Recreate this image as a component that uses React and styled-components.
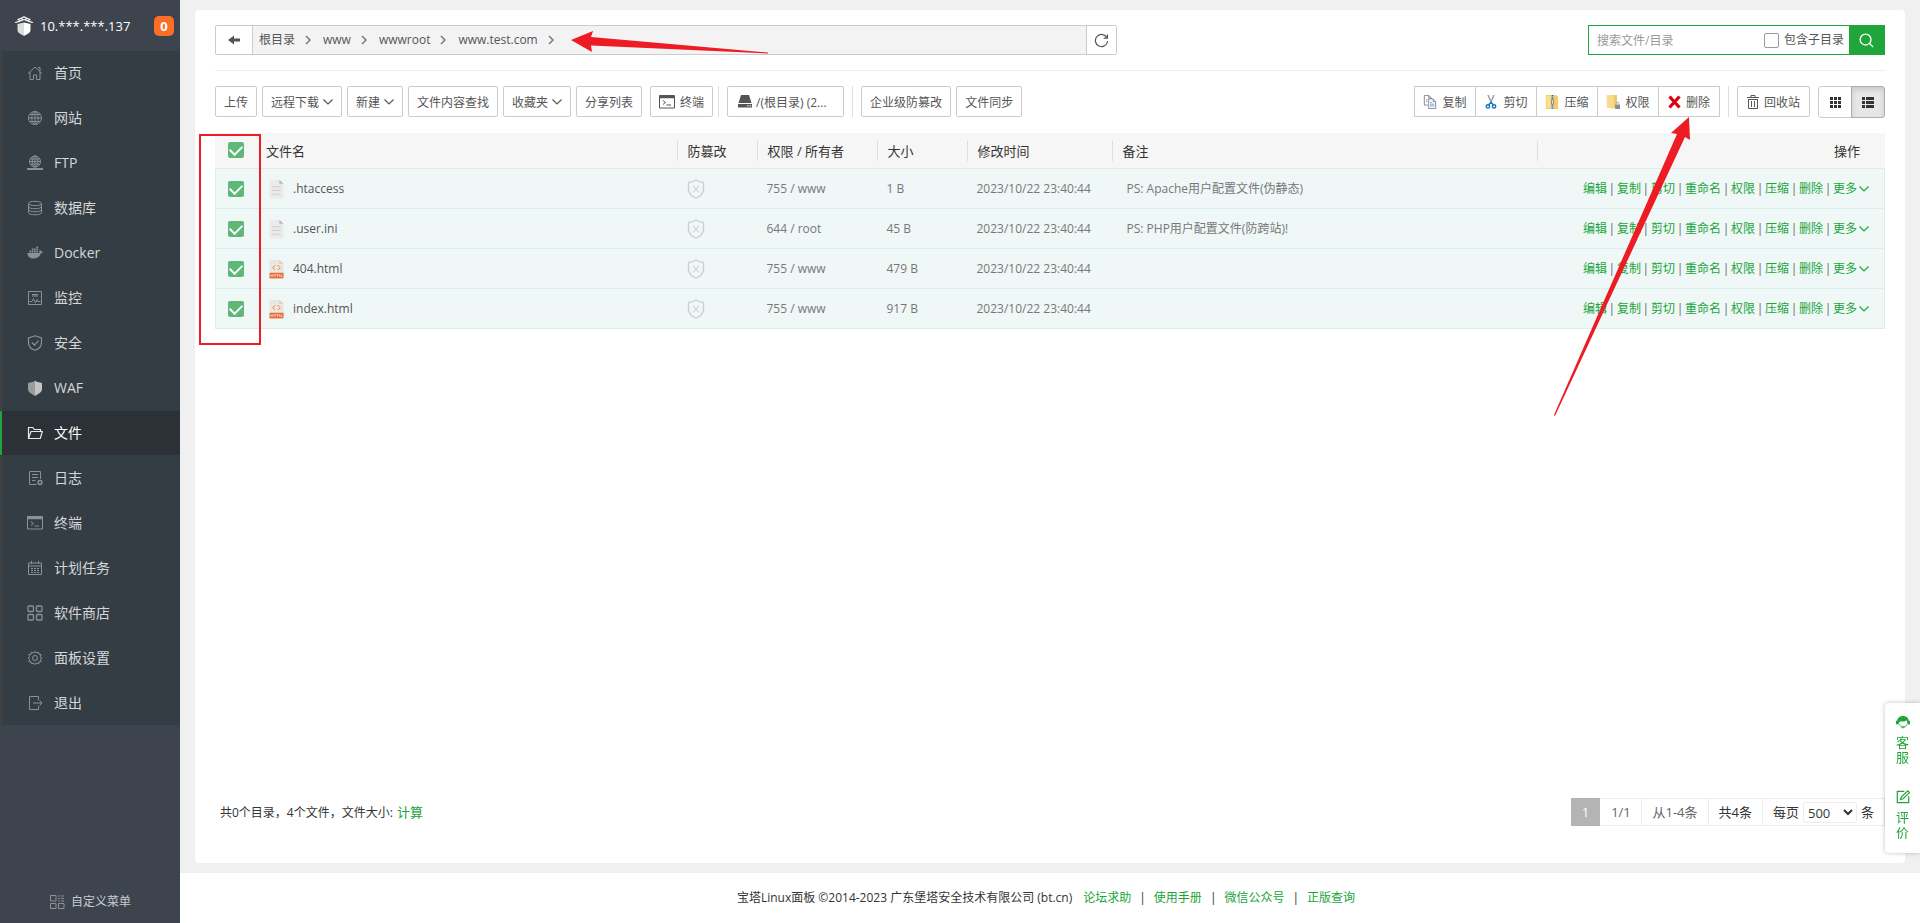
import React from "react";
import styled, { createGlobalStyle } from "styled-components";

const GlobalStyle = createGlobalStyle`
    * {
        box-sizing: border-box;
    }
    body {
        margin: 0;
        background: #f0f0f0;
        color: #333;
        font-family: "Open Sans", "Noto Sans", "Noto Sans CJK SC", sans-serif;
        font-size: 12px;
        line-height: 20px;
    }
    a {
        color: #20a53a;
        text-decoration: none;
    }
    button, input, select {
        font-family: inherit;
        font-size: inherit;
        color: inherit;
        margin: 0;
    }
    button {
        cursor: pointer;
    }
    svg {
        display: block;
        flex: none;
    }
`

const Page = styled.div`
    position: relative;
    display: flex;
    min-height: 100vh;
`
const Sidebar = styled.aside`
    display: flex;
    flex-direction: column;
    flex: none;
    width: 180px;
    background: #3d444d;
`
const Brand = styled.div`
    display: flex;
    align-items: center;
    height: 51px;
    padding: 0 6px 0 15px;
    color: #fff;
    font-size: 13px;
    svg {
        margin-right: 7px;
    }
    span {
        flex: 1;
    }
`
const Badge = styled.b`
    width: 20px;
    height: 20px;
    border-radius: 5px;
    background: #fc6d26;
    font-size: 13px;
    text-align: center;
`
const MenuList = styled.ul`
    margin: 0;
    padding: 0;
    list-style: none;
    background: #353d44;
    li {
        border-bottom: 1px solid #353d44;
    }
    li:last-child {
        border-bottom: 0;
    }
`
const MenuLink = styled.a`
    display: flex;
    align-items: center;
    gap: 11px;
    height: 44px;
    padding-left: 25px;
    border-left: 2px solid ${props => props.$active ? "#20a53a" : "#414141"};
    background: ${props => props.$active ? "#2c3138" : "transparent"};
    color: ${props => props.$active ? "#fff" : "#d4d7d9"};
    font-size: 14px;
    svg {
        color: ${props => props.$active ? "#e8e8e8" : "#8d9194"};
    }
`
const CustomMenu = styled.a`
    display: flex;
    justify-content: center;
    align-items: center;
    gap: 6px;
    height: 43px;
    margin-top: auto;
    color: #c8ccd0;
    svg {
        color: #8d9194;
    }
`
const Main = styled.main`
    display: flex;
    flex-direction: column;
    flex: 1;
    min-width: 0;
`
const Card = styled.section`
    display: flex;
    flex-direction: column;
    flex: 1;
    margin: 10px 15px;
    padding: 15px 20px 37px;
    border-radius: 4px;
    background: #fff;
`
const TopBar = styled.div`
    display: flex;
    justify-content: space-between;
    padding-bottom: 15px;
    border-bottom: 1px solid #ececec;
`
const PathBar = styled.div`
    display: flex;
    width: 902px;
    height: 30px;
    border: 1px solid #ccc;
    border-radius: 2px;
    background: #f3f3f3;
`
const PathButton = styled.button`
    display: flex;
    align-items: center;
    justify-content: center;
    width: ${props => props.$wide ? "37px" : "30px"};
    padding: 0;
    border: 0;
    border-${props => props.$wide ? "right" : "left"}: 1px solid #ccc;
    background: #fff;
    color: #555;
`
const Crumbs = styled.nav`
    display: flex;
    align-items: center;
    flex: 1;
    padding-left: 6px;
    a {
        display: flex;
        align-items: center;
        color: #555;
    }
    svg {
        margin: 0 12px 0 10px;
    }
`
const SearchBox = styled.form`
    display: flex;
    align-items: center;
    width: 297px;
    height: 30px;
    border: 1px solid #20a53a;
    input[type="text"] {
        flex: 1;
        min-width: 0;
        height: 28px;
        padding: 0 8px;
        border: 0;
        outline: 0;
        &::placeholder {
            color: #999;
        }
    }
    label {
        display: flex;
        align-items: center;
        gap: 5px;
        margin-right: 5px;
        color: #555;
    }
    button {
        display: flex;
        align-items: center;
        justify-content: center;
        width: 35px;
        height: 28px;
        padding: 0;
        border: 0;
        background: #20a53a;
        color: #fff;
    }
`
const PlainCheck = styled.input`
    appearance: none;
    width: 15px;
    height: 15px;
    border: 1px solid #999;
    border-radius: 2px;
    background: #fff;
`
const Toolbar = styled.div`
    display: flex;
    justify-content: space-between;
    height: 62px;
    padding: 15px 0;
`
const ToolGroup = styled.div`
    display: flex;
    align-items: flex-start;
    gap: ${props => props.$gap || "5px"};
`
const Divider = styled.span`
    width: 1px;
    height: 31px;
    margin: ${props => props.$margin || "0"};
    background: #ddd;
`
const Button = styled.button`
    display: flex;
    align-items: center;
    justify-content: center;
    gap: 4px;
    height: 31px;
    padding: 0 8px;
    border: 1px solid #ccc;
    border-radius: 2px;
    background: #fff;
    color: #555;
    white-space: nowrap;
`
const TerminalButton = styled(Button)`
    gap: 5px;
    margin-left: 3px;
`
const DiskButton = styled(Button)`
    justify-content: flex-start;
    width: 117px;
    padding: 0 10px;
`
const TrashButton = styled(Button)`
    gap: 5px;
    padding: 0 9px;
`
const JoinedButtons = styled.div`
    display: flex;
    button {
        gap: 5px;
        width: 62px;
        padding: 0;
        border-radius: 0;
    }
    button + button {
        margin-left: -1px;
    }
`
const ViewSwitch = styled.div`
    display: flex;
`
const ViewButton = styled.button`
    display: flex;
    align-items: center;
    justify-content: center;
    width: 34px;
    height: 32px;
    padding: 0;
    border: 1px solid ${props => props.$active ? "#adadad" : "#ccc"};
    border-radius: ${props => props.$active ? "0 3px 3px 0" : "3px 0 0 3px"};
    margin-left: ${props => props.$active ? "-1px" : "0"};
    background: ${props => props.$active ? "#e6e6e6" : "#fff"};
    box-shadow: ${props => props.$active ? "inset 0 3px 5px rgba(0, 0, 0, .12)" : "none"};
    color: #333;
`
const FileTable = styled.table`
    width: 100%;
    table-layout: fixed;
    border-collapse: separate;
    border-spacing: 0;
    th {
        height: 36px;
        padding: 0;
        border-bottom: 1px solid #e8e8e8;
        background: #f6f6f6;
        font-size: 13px;
        font-weight: normal;
        text-align: left;
    }
    td {
        height: 40px;
        padding: 1px 0 0 10px;
        border-bottom: 1px solid #dbefea;
        background: #eff8f7;
        color: #777;
        white-space: nowrap;
    }
    td:first-child {
        border-left: 1px solid #dbefea;
    }
    td:last-child {
        border-right: 1px solid #dbefea;
    }
`
const Col = styled.col`
    width: ${props => props.$width};
`
const HeadCell = styled.div`
    display: flex;
    align-items: center;
    justify-content: ${props => props.$end ? "flex-end" : "flex-start"};
    height: 20px;
    padding: 0 ${props => props.$end ? "25px" : "0"} 0 ${props => props.$first ? "7px" : "10px"};
    border-left: ${props => props.$first ? "0" : "1px solid #ddd"};
`
const CheckCell = styled.div`
    display: flex;
    padding: ${props => props.$head ? "0 0 2px 13px" : "0 0 0 2px"};
`
const GreenCheck = styled.input`
    appearance: none;
    display: flex;
    justify-content: center;
    width: 16px;
    height: 16px;
    border-radius: 2px;
    background: #fff;
    &:checked {
        background: #5fb878;
    }
    &:checked::after {
        content: "";
        width: 6px;
        height: 10px;
        margin-top: 1px;
        border: solid #fff;
        border-width: 0 2px 2px 0;
        transform: rotate(45deg);
    }
`
const FileName = styled.a`
    display: flex;
    align-items: center;
    gap: 9px;
    color: #555;
`
const Note = styled.span`
    padding-left: 5px;
`
const RowActions = styled.div`
    display: flex;
    justify-content: flex-end;
    padding-right: 15px;
    a {
        display: flex;
        align-items: center;
        gap: 2px;
    }
    span {
        width: 10px;
        color: #666;
        text-align: center;
    }
`
const CardFooter = styled.div`
    display: flex;
    align-items: center;
    justify-content: space-between;
    margin-top: auto;
    padding-left: 5px;
    a {
        margin-left: 1px;
        font-size: 13px;
    }
`
const Pager = styled.div`
    display: flex;
    height: 28px;
    font-size: 13px;
`
const PagerItem = styled.span`
    display: flex;
    align-items: center;
    justify-content: center;
    gap: 4px;
    min-width: ${props => props.$current ? "29px" : "42px"};
    padding: 0 10px;
    border: 1px solid #ececec;
    border-left: 0;
    color: ${props => props.$dim ? "#666" : "#333"};
    ${props => props.$current && "background: #b4b4b4; border-color: #b4b4b4; color: #fff;"}
    label {
        display: flex;
        align-items: center;
        gap: 4px;
    }
    select {
        width: 54px;
        height: 21px;
        padding: 0;
        border: 1px solid #ececec;
        border-radius: 2px;
        background: #fff;
    }
`
const Copyright = styled.footer`
    display: flex;
    align-items: center;
    justify-content: center;
    gap: 8px;
    height: 50px;
    padding-right: 8px;
    background: #fff;
    span {
        margin-right: 3px;
    }
`
const SideWidget = styled.aside`
    position: fixed;
    right: 0;
    bottom: 70px;
    display: flex;
    flex-direction: column;
    align-items: center;
    gap: 25px;
    width: 35px;
    height: 150px;
    padding: 12px 0;
    border-radius: 4px 0 0 4px;
    background: #fff;
    box-shadow: 0 0 4px rgba(0, 0, 0, .25);
    a {
        display: flex;
        flex-direction: column;
        align-items: center;
        gap: 6px;
        width: 14px;
        font-size: 13px;
        line-height: 15px;
        text-align: center;
    }
`
const MarkBox = styled.div`
    position: absolute;
    left: 199px;
    top: 134px;
    width: 62px;
    height: 211px;
    border: 2px solid #ed1c24;
    pointer-events: none;
`
const PathArrow = styled.svg`
    position: absolute;
    left: 571px;
    top: 30px;
    pointer-events: none;
`
const DeleteArrow = styled.svg`
    position: absolute;
    right: 220px;
    top: 117px;
    pointer-events: none;
`

const Icon = ({ size = 16, children, ...rest }) => (
    <svg width={size} height={size} viewBox="0 0 16 16" fill="none" stroke="currentColor" strokeWidth="1" aria-hidden="true" {...rest}>
        {children}
    </svg>
)

const icons = {
    home: <path d="M1 8.500 8 2l7 6.500M3 7v7.500h3.500V10h3v4.500H13V7M11 2.500h2V6" />,
    globe: <g><circle cx="8" cy="8" r="6.500" /><path d="M1.500 8h13M8 1.500v13M3 4.500h10M3 11.500h10" /><ellipse cx="8" cy="8" rx="3.200" ry="6.500" /></g>,
    ftp: <g><circle cx="8" cy="6.500" r="5.500" /><path d="M2.500 6.500h11M8 1v11M3.500 4h9M3.500 9h9" /><ellipse cx="8" cy="6.500" rx="2.800" ry="5.500" /><path d="M0 14h16" strokeWidth="2" /></g>,
    database: <g><ellipse cx="8" cy="3.500" rx="6.500" ry="2.200" /><path d="M1.500 3.500v9c0 3 13 3 13 0v-9M1.500 6.500c0 3 13 3 13 0M1.500 9.500c0 3 13 3 13 0" /></g>,
    docker: <g fill="currentColor" stroke="none"><path d="M.500 8h11c.8 0 1.200-.5 1-1.500-.2-.8 0-1.300.5-1.800.7.500 1 1 1 1.800.7-.1 1.500 0 2 .5-.5.900-1.300 1.200-2.200 1.200C12.800 11.500 10.500 13.500 6.500 13.500 3 13.500.3 11.500.500 8z" /><path d="M2.500 5.500h1.700v2H2.500zM4.800 5.500h1.700v2H4.800zM7.100 5.500h1.700v2H7.100zM9.400 5.500h1.700v2H9.400zM4.800 3.500h1.700v1.400H4.800zM7.100 3.500h1.700v1.400H7.100zM9.400 3.500h1.700v1.400H9.400zM9.400 1.500h1.700v1.400H9.400z" /></g>,
    monitor: <g><path d="M1.500 1.500h13v13h-13zM5 4.500h6M5 6h6M2.500 11.500H5l1.500-3 2 4.500 1.500-3.500 1 2h2.500" /></g>,
    shield: <path d="M8 .8 14.500 3v5c0 3.500-3 6-6.500 7.300C4.500 14 1.500 11.500 1.500 8V3zM5 7.500l2.500 2.700 4-4.500" strokeWidth="1.200" />,
    waf: <g stroke="none"><path d="M8 .5 6.500 1.800 1 3v6c0 3.500 4 5 7 7z" fill="#9b9b9b" /><path d="M8 .5l1.500 1.300L15 3v6c0 3.500-4 5-7 7z" fill="#c4c4c4" /></g>,
    folder: <path d="M1.500 13.500V2.500h4.300L7.300 4.500h6.200v2M1.500 13.500 4 6.500h11.300l-2 7z" strokeWidth="1.200" />,
    log: <g><path d="M9.500 14.500h-7v-13h11v7.500M5 4.500h6M5 7.500h6M5 10.500h3.500" /><circle cx="13" cy="12.500" r="1.900" strokeWidth="1.500" /></g>,
    terminal: <g><path d="M.500 1.500h15v12.500H.500z" /><path d="M.500 3h15" strokeWidth="2.500" /><path d="M4 6.500 6.500 8.500 4 10.500M7.500 11H12" /></g>,
    calendar: <g><path d="M1.500 3h13v11.500h-13zM1.500 6h13M4.500 1v3M11.500 1v3" /><path d="M4 8.500h8.500M4 10.500h8.500M4 12.500h8.500" strokeDasharray="2 1" /></g>,
    apps: <g strokeWidth="1.300"><rect x="1" y="1" width="5.500" height="5.500" rx="1" /><rect x="9.500" y="1" width="5.500" height="5.500" rx="1" /><rect x="1" y="9.500" width="5.500" height="5.500" rx="1" /><rect x="9.500" y="9.500" width="5.500" height="5.500" rx="1" /></g>,
    gear: <g><path d="M6.800 3 8 1.300 9.200 3l2.500-.8.300 2.100 2.200.2-.8 2.300L15 8l-1.600 1.200.8 2.300-2.200.2-.3 2.100-2.500-.8L8 14.700 6.800 13l-2.500.8-.3-2.100-2.200-.2.800-2.300L1 8l1.600-1.200-.8-2.300 2.200-.2.300-2.100z" /><circle cx="8" cy="8" r="2.500" /></g>,
    exit: <path d="M11.500 5V1.500h-9v13h9V11M6 8h9M12.500 5.500 15 8l-2.500 2.500" />,
    custom: <path d="M1.500 1.500h5.500v5.500H1.500zM1.500 9.500h5.500v5H1.500zM9.500 9.500h5.500v5H9.500zM9 2h2M12 2h3M9 4.500h2M12 4.500h3M9 7h2M12 7h3" />,
}

const menu = [
    ["home", "首页"],
    ["globe", "网站"],
    ["ftp", "FTP"],
    ["database", "数据库"],
    ["docker", "Docker"],
    ["monitor", "监控"],
    ["shield", "安全"],
    ["waf", "WAF"],
    ["folder", "文件"],
    ["log", "日志"],
    ["terminal", "终端"],
    ["calendar", "计划任务"],
    ["apps", "软件商店"],
    ["gear", "面板设置"],
    ["exit", "退出"],
]

const files = [
    { name: ".htaccess", type: "text", owner: "755 / www", size: "1 B", note: "PS: Apache用户配置文件(伪静态)" },
    { name: ".user.ini", type: "text", owner: "644 / root", size: "45 B", note: "PS: PHP用户配置文件(防跨站)!" },
    { name: "404.html", type: "html", owner: "755 / www", size: "479 B", note: "" },
    { name: "index.html", type: "html", owner: "755 / www", size: "917 B", note: "" },
]

const actions = ["编辑", "复制", "剪切", "重命名", "权限", "压缩", "删除", "更多"]

const Chevron = () => (
    <svg width="10" height="10" viewBox="0 0 10 10" fill="none" stroke="currentColor" strokeWidth="1.200" aria-hidden="true">
        <path d="M.500 2.500 5 7l4.500-4.500" />
    </svg>
)

const CrumbArrow = () => (
    <svg width="6" height="10" viewBox="0 0 6 10" fill="none" stroke="#777" strokeWidth="1.500" aria-hidden="true">
        <path d="M1 1l4 4-4 4" />
    </svg>
)

const Logo = () => (
    <svg width="18" height="20" viewBox="0 0 18 20" aria-hidden="true">
        <path d="M9 6.500 2.500 8v6c0 3 3.500 4 6.500 6z" fill="#ddd" />
        <path d="M9 6.500 15.500 8v6c0 3-3.500 4-6.500 6z" fill="#fff" />
        <path d="M0 6.500C3 6 6 4.500 9 3.500c3 1 6 2.500 9 3M2.500 3.500C5 3 7 2 9 .8c2 1.200 4 2.200 6.500 2.700M4 3v3M14 3v3M7 2v3M11 2v3" fill="none" stroke="#fff" strokeWidth="1.200" />
    </svg>
)

const FileIcon = ({ type }) => (
    <svg width="15" height="20" viewBox="0 0 16 20" aria-hidden="true">
        <path d="M.500 0H11l4.500 4.500V20H.500z" fill={type === "html" ? "#ebe7dc" : "#ebebeb"} />
        <path d="M11 0v4.500h4.500z" fill={type === "html" ? "#d5d1c5" : "#bbb"} />
        {type === "html" ? (
            <g>
                <path d="M6.500 6 4 8.500 6.500 11M9.500 6 12 8.500 9.500 11" fill="none" stroke="#ed7a4d" />
                <path d="M.500 14h15v6H.500z" fill="#ea6a37" />
                <path d="M2 15.500v3M4 15.500v3M2 17h2M5 16h3M6.500 16v2.500M9 18.500v-3l1.200 1.500 1.300-1.500v3M13 15.500v2.800h1.500" fill="none" stroke="#fbd9ca" strokeWidth=".8" />
            </g>
        ) : (
            <path d="M3.500 7.500h9M3.500 11.500h9M3.500 15.500h9" stroke="#ccc" />
        )}
    </svg>
)

const TamperIcon = () => (
    <svg width="18" height="20" viewBox="0 0 18 20" fill="none" stroke="#ccd1d0" strokeWidth="1.400" aria-hidden="true">
        <path d="M9 1c2 1.600 4.500 2.300 7.500 2.500V10c0 4.500-3 7.300-7.500 9.200C4.500 17.300 1.500 14.500 1.500 10V3.500C4.500 3.300 7 2.600 9 1z" />
        <path d="M6 6.500l6 7M12 6.500l-6 7" strokeWidth="1.100" />
    </svg>
)

const CopyIcon = () => (
    <Icon size={14} stroke="#777f8c">
        <path d="M5.500 11.500h-4V.500h5l3 3v1.500M6.500.500v3h3M3.500 5.500H5M3.500 7.500H5" />
        <path d="M6.500 4.500h5l3 3v8h-8z" fill="#fff" />
        <path d="M11.500 4.500v3h3M8 8.500h2M8 10.500h5M8 12.500h5" stroke="#6793c9" />
    </Icon>
)

const CutIcon = () => (
    <Icon size={14}>
        <path d="M4.500 0 9 10M11.500 0 7 10" stroke="#8b97a3" strokeWidth="1.500" />
        <circle cx="4.500" cy="13" r="1.900" stroke="#1478c4" strokeWidth="1.700" />
        <circle cx="11.500" cy="13" r="1.900" stroke="#1478c4" strokeWidth="1.700" />
        <path d="M5.500 11 8 8.500l2.500 2.500" stroke="#1478c4" strokeWidth="1.700" />
    </Icon>
)

const ZipIcon = () => (
    <Icon size={14} stroke="none">
        <path d="M1 0h12l2 2v14H1z" fill="#f3cf62" />
        <path d="M2 1h5v14H2z" fill="#fbe08a" />
        <path d="M6.500 0h4v16h-4z" fill="#c5c5bc" />
        <path d="M8.500 0v5M8.500 11v5" stroke="#555" strokeWidth="1.500" strokeDasharray="1 1" />
        <path d="M7.500 5.500h2v5h-2z" fill="#fff" stroke="#666" strokeWidth=".8" />
    </Icon>
)

const LockIcon = () => (
    <Icon size={14} stroke="none">
        <path d="M1 0h11.500v15.500l-5-1-6.500-.5z" fill="#efc96b" />
        <path d="M1 0h8v16l-8-2z" fill="#f8db8e" />
        <path d="M10.500 11H16v5h-5.500z" fill="#8b8b8b" />
        <path d="M11.700 11V9.700c0-2 3-2 3 0V11" fill="none" stroke="#999" />
    </Icon>
)

const DeleteIcon = () => (
    <svg width="13" height="14" viewBox="0 0 13 14" stroke="#d9000f" strokeWidth="3.200" aria-hidden="true">
        <path d="M1.500 1.500l10 11M11.500 1.500l-10 11" />
    </svg>
)

const Menu = () => (
    <Sidebar>
        <Brand>
            <Logo />
            <span>10.***.***.137</span>
            <Badge>0</Badge>
        </Brand>
        <MenuList>
            {menu.map(([icon, label]) => (
                <li key={icon}>
                    <MenuLink href="#" $active={icon === "folder"}>
                        <Icon>{icons[icon]}</Icon>
                        {label}
                    </MenuLink>
                </li>
            ))}
        </MenuList>
        <CustomMenu href="#">
            <Icon>{icons.custom}</Icon>
            自定义菜单
        </CustomMenu>
    </Sidebar>
)

const Header = () => (
    <TopBar>
        <PathBar>
            <PathButton type="button" $wide aria-label="返回">
                <svg width="12" height="10" viewBox="0 0 12 10" fill="currentColor" aria-hidden="true">
                    <path d="M0 5 6 .500v3h6v3H6v3z" />
                </svg>
            </PathButton>
            <Crumbs>
                {["根目录", "www", "wwwroot", "www.test.com"].map(part => (
                    <a href="#" key={part}>{part}<CrumbArrow /></a>
                ))}
            </Crumbs>
            <PathButton type="button" aria-label="刷新">
                <Icon size={15} strokeWidth="1.300">
                    <path d="M14 5.500A6.500 6.500 0 1 0 14.500 8.500M14.300 1.500v4h-4" />
                </Icon>
            </PathButton>
        </PathBar>
        <SearchBox onSubmit={e => e.preventDefault()}>
            <input type="text" placeholder="搜索文件/目录" aria-label="搜索文件/目录" />
            <label>
                <PlainCheck type="checkbox" />
                包含子目录
            </label>
            <button type="submit" aria-label="搜索">
                <Icon size={15} strokeWidth="1.400">
                    <circle cx="7" cy="7" r="5.800" />
                    <path d="M11 11l4 4" />
                </Icon>
            </button>
        </SearchBox>
    </TopBar>
)

const Tools = () => (
    <Toolbar>
        <ToolGroup>
            <Button>上传</Button>
            <Button>远程下载<Chevron /></Button>
            <Button>新建<Chevron /></Button>
            <Button>文件内容查找</Button>
            <Button>收藏夹<Chevron /></Button>
            <Button>分享列表</Button>
            <TerminalButton><Icon>{icons.terminal}</Icon>终端</TerminalButton>
            <Divider $margin="0 3px 0 0" />
            <DiskButton>
                <svg width="14" height="13" viewBox="0 0 14 13" fill="currentColor" aria-hidden="true">
                    <path d="M3 0h8l2.500 8H.500zM0 9h14v3.500H0z" />
                    <path d="M9 10.800h1.500M11.500 10.800H13" stroke="#fff" />
                </svg>
                /(根目录) (2...
            </DiskButton>
            <Divider $margin="0 3px" />
            <Button>企业级防篡改</Button>
            <Button>文件同步</Button>
        </ToolGroup>
        <ToolGroup $gap="8px">
            <JoinedButtons>
                <Button><CopyIcon />复制</Button>
                <Button><CutIcon />剪切</Button>
                <Button><ZipIcon />压缩</Button>
                <Button><LockIcon />权限</Button>
                <Button><DeleteIcon />删除</Button>
            </JoinedButtons>
            <Divider />
            <TrashButton>
                <svg width="12" height="14" viewBox="0 0 12 14" fill="none" stroke="currentColor" aria-hidden="true">
                    <path d="M0 2.500h12M4 2.500V.500h4v2M1.500 4v9.500h9V4M1 4.500h10M4.500 6v6M7.500 6v6" />
                </svg>
                回收站
            </TrashButton>
            <ViewSwitch>
                <ViewButton aria-label="网格视图">
                    <svg width="11" height="11" viewBox="0 0 11 11" aria-hidden="true">
                        <path d="M0 1.500h11M0 5.500h11M0 9.500h11" stroke="currentColor" strokeWidth="3" strokeDasharray="3 1" />
                    </svg>
                </ViewButton>
                <ViewButton $active aria-label="列表视图">
                    <svg width="12" height="11" viewBox="0 0 12 11" aria-hidden="true">
                        <path d="M0 1.500h12M0 5.500h12M0 9.500h12" stroke="currentColor" strokeWidth="3" strokeDasharray="3 1 8 1" />
                    </svg>
                </ViewButton>
            </ViewSwitch>
        </ToolGroup>
    </Toolbar>
)

const Files = () => (
    <FileTable>
        <colgroup>
            <Col $width="44px" />
            <Col $width="25%" />
            <Col $width="80px" />
            <Col $width="120px" />
            <Col $width="90px" />
            <Col $width="145px" />
            <Col />
            <Col $width="348px" />
        </colgroup>
        <thead>
            <tr>
                <th><CheckCell $head><GreenCheck type="checkbox" defaultChecked aria-label="全选" /></CheckCell></th>
                <th><HeadCell $first>文件名</HeadCell></th>
                <th><HeadCell>防篡改</HeadCell></th>
                <th><HeadCell>权限 / 所有者</HeadCell></th>
                <th><HeadCell>大小</HeadCell></th>
                <th><HeadCell>修改时间</HeadCell></th>
                <th><HeadCell>备注</HeadCell></th>
                <th><HeadCell $end>操作</HeadCell></th>
            </tr>
        </thead>
        <tbody>
            {files.map(file => (
                <tr key={file.name}>
                    <td><CheckCell><GreenCheck type="checkbox" defaultChecked aria-label={file.name} /></CheckCell></td>
                    <td><FileName href="#"><FileIcon type={file.type} />{file.name}</FileName></td>
                    <td><TamperIcon /></td>
                    <td>{file.owner}</td>
                    <td>{file.size}</td>
                    <td>2023/10/22 23:40:44</td>
                    <td><Note>{file.note}</Note></td>
                    <td>
                        <RowActions>
                            {actions.map((action, i) => (
                                <React.Fragment key={action}>
                                    {i > 0 && <span>|</span>}
                                    <a href="#">{action}{action === "更多" && <Chevron />}</a>
                                </React.Fragment>
                            ))}
                        </RowActions>
                    </td>
                </tr>
            ))}
        </tbody>
    </FileTable>
)

const App = () => {
    return (
        <Page>
            <GlobalStyle />
            <Menu />
            <Main>
                <Card>
                    <Header />
                    <Tools />
                    <Files />
                    <CardFooter>
                        <div>共0个目录，4个文件，文件大小: <a href="#">计算</a></div>
                        <Pager>
                            <PagerItem $current>1</PagerItem>
                            <PagerItem $dim>1/1</PagerItem>
                            <PagerItem $dim>从1-4条</PagerItem>
                            <PagerItem>共4条</PagerItem>
                            <PagerItem>
                                <label>
                                    每页
                                    <select defaultValue="500">
                                        <option>100</option>
                                        <option>500</option>
                                        <option>1000</option>
                                    </select>
                                </label>
                                条
                            </PagerItem>
                        </Pager>
                    </CardFooter>
                </Card>
                <Copyright>
                    <span>宝塔Linux面板 ©2014-2023 广东堡塔安全技术有限公司 (bt.cn)</span>
                    <a href="#">论坛求助</a>|
                    <a href="#">使用手册</a>|
                    <a href="#">微信公众号</a>|
                    <a href="#">正版查询</a>
                </Copyright>
            </Main>
            <SideWidget>
                <a href="#">
                    <Icon size={14} stroke="none" fill="currentColor">
                        <path d="M8 1C4 1 1.500 3.500 1.500 6.500H0v4h3c0-2 1-3 2.500-3.500C8 8 10.500 7.500 12 6c.8 1 1 2.500 1 4.500h3v-4h-1.500C14.500 3.500 12 1 8 1z" />
                        <path d="M3.500 10.500c1 3 7.500 4.500 9.500 0M6 14.500h4" fill="none" stroke="currentColor" />
                    </Icon>
                    客服
                </a>
                <a href="#">
                    <Icon size={14} strokeWidth="1.400">
                        <path d="M9.500 1.500h-8v13h13V7M5 11l1-3 7.500-7 2 2L8 10z" />
                    </Icon>
                    评价
                </a>
            </SideWidget>
            <MarkBox />
            <PathArrow width="197" height="24" viewBox="0 0 197 24" aria-hidden="true">
                <path d="M0 10 22 1l-2 6 177 15.500v1L20 15.500l1 6.500z" fill="#ed1c24" />
            </PathArrow>
            <DeleteArrow width="146" height="299" viewBox="0 0 146 299" aria-hidden="true">
                <path d="M135 0l1 23-5-3L1 299l-1-1L123 17l-6-1z" fill="#ed1c24" />
            </DeleteArrow>
        </Page>
    )
}

export default App;
